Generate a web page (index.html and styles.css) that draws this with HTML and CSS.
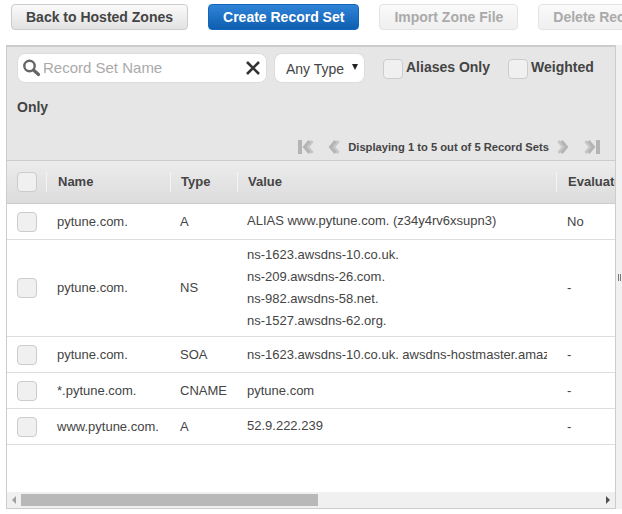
FILE: index.html
```html
<!DOCTYPE html>
<html lang="en">
<head>
    <meta charset="UTF-8">
    <title>Record Sets</title>
    <link rel="stylesheet" href="styles.css">
</head>
<body>
    <div class="toolbar">
        <button class="btn">Back to Hosted Zones</button>
        <button class="btn btn-primary">Create Record Set</button>
        <button class="btn btn-disabled">Import Zone File</button>
        <button class="btn btn-disabled">Delete Record Set</button>
    </div>
    <div class="main">
        <div class="panel">
            <div class="filters">
                <div class="filter-row">
                    <div class="search">
                        <svg class="search-icon" width="20" height="20" viewBox="0 0 20 20">
                            <circle cx="7.5" cy="8" r="5.2" fill="none" stroke="#666" stroke-width="2.4"/>
                            <path d="M11.5 12L16.5 16.5" stroke="#666" stroke-width="3.2" stroke-linecap="round"/>
                        </svg>
                        <span class="search-text">Record Set Name</span>
                        <svg class="clear-icon" width="14" height="14" viewBox="0 0 14 14">
                            <path d="M1 1L13 13M13 1L1 13" stroke="#333" stroke-width="2.6"/>
                        </svg>
                    </div>
                    <div class="type-select">Any Type<span class="caret"></span></div>
                    <label class="check-label"><span class="check"></span>Aliases Only</label>
                    <label class="check-label"><span class="check"></span>Weighted</label>
                </div>
                <div class="only">Only</div>
                <div class="pager">
                    <svg class="pager-icon" width="18" height="16" viewBox="0 0 18 16">
                        <path d="M1 1h4v14H1z" fill="#b4b4b4"/>
                        <path d="M15.5 2L10.5 8l5 6" fill="none" stroke="#c6c6c6" stroke-width="3"/>
                        <path d="M12.5 2L7.5 8l5 6" fill="none" stroke="#b4b4b4" stroke-width="3"/>
                    </svg>
                    <svg class="pager-icon prev" width="14" height="16" viewBox="0 0 14 16">
                        <path d="M10.5 2L5.5 8l5 6" fill="none" stroke="#c6c6c6" stroke-width="3"/>
                        <path d="M7.5 2L2.5 8l5 6" fill="none" stroke="#b4b4b4" stroke-width="3"/>
                    </svg>
                    <span class="pager-text">Displaying 1 to 5 out of 5 Record Sets</span>
                    <svg class="pager-icon next" width="14" height="16" viewBox="0 0 14 16">
                        <path d="M3.5 2L8.5 8l-5 6" fill="none" stroke="#c6c6c6" stroke-width="3"/>
                        <path d="M6.5 2L11.5 8l-5 6" fill="none" stroke="#b4b4b4" stroke-width="3"/>
                    </svg>
                    <svg class="pager-icon" width="18" height="16" viewBox="0 0 18 16">
                        <path d="M13 1h4v14h-4z" fill="#b4b4b4"/>
                        <path d="M2.5 2L7.5 8l-5 6" fill="none" stroke="#c6c6c6" stroke-width="3"/>
                        <path d="M5.5 2L10.5 8l-5 6" fill="none" stroke="#b4b4b4" stroke-width="3"/>
                    </svg>
                </div>
            </div>
            <div class="table-wrap">
                <table class="records">
                    <colgroup>
                        <col class="col-check">
                        <col class="col-name">
                        <col class="col-type">
                        <col class="col-value">
                        <col class="col-eval">
                    </colgroup>
                    <thead>
                        <tr>
                            <th><span class="check"></span></th>
                            <th><span class="th-label">Name</span></th>
                            <th><span class="th-label">Type</span></th>
                            <th><span class="th-label">Value</span></th>
                            <th><span class="th-label">Evaluate Target Health</span></th>
                        </tr>
                    </thead>
                    <tbody>
                        <tr>
                            <td><span class="check"></span></td>
                            <td>pytune.com.</td>
                            <td>A</td>
                            <td><div class="value value-up">ALIAS www.pytune.com. (z34y4rv6xsupn3)</div></td>
                            <td>No</td>
                        </tr>
                        <tr class="row-ns">
                            <td><span class="check"></span></td>
                            <td>pytune.com.</td>
                            <td>NS</td>
                            <td>
                                <div class="value">ns-1623.awsdns-10.co.uk.</div>
                                <div class="value">ns-209.awsdns-26.com.</div>
                                <div class="value">ns-982.awsdns-58.net.</div>
                                <div class="value">ns-1527.awsdns-62.org.</div>
                            </td>
                            <td>-</td>
                        </tr>
                        <tr>
                            <td><span class="check"></span></td>
                            <td>pytune.com.</td>
                            <td>SOA</td>
                            <td><div class="value">ns-1623.awsdns-10.co.uk. awsdns-hostmaster.amazon.com. 1 7200 900</div></td>
                            <td>-</td>
                        </tr>
                        <tr>
                            <td><span class="check"></span></td>
                            <td>*.pytune.com.</td>
                            <td>CNAME</td>
                            <td><div class="value">pytune.com</div></td>
                            <td>-</td>
                        </tr>
                        <tr>
                            <td><span class="check"></span></td>
                            <td>www.pytune.com.</td>
                            <td>A</td>
                            <td><div class="value value-up">52.9.222.239</div></td>
                            <td>-</td>
                        </tr>
                    </tbody>
                </table>
            </div>
            <div class="scrollbar">
                <span class="arrow-left"></span>
                <div class="scroll-track"><div class="scroll-thumb"></div></div>
                <span class="arrow-right"></span>
            </div>
        </div>
        <div class="side"><span class="handle"></span></div>
    </div>
</body>
</html>
```

FILE: styles.css
```css
html, body {
    height: 100%;
}

body {
    margin: 0;
    font-family: "Liberation Sans", Arial, sans-serif;
    color: #444;
    background-color: #fff;
    overflow: hidden;
}

.toolbar {
    display: flex;
    gap: 20px;
    height: 45px;
    padding: 4px 0 0 11px;
    box-sizing: border-box;
    white-space: nowrap;
    overflow: hidden;
}

.btn {
    flex: none;
    height: 26px;
    padding: 0 14px;
    font-family: inherit;
    font-size: 14px;
    font-weight: bold;
    color: #444;
    background: linear-gradient(#fafafa, #e2e2e2);
    border: 1px solid #ccc;
    border-radius: 4px;
}

.btn-primary {
    color: #fff;
    background: linear-gradient(#2f84d8, #0f5eb0);
    border-color: #1166bb;
}

.btn-disabled {
    color: #aaa;
    background: linear-gradient(#fafafa, #efefef);
    border-color: #e3e3e3;
}

.main {
    display: flex;
    height: 464px;
    padding-left: 6px;
}

.panel {
    display: flex;
    flex-direction: column;
    width: 610px;
    box-sizing: border-box;
    border: 1px solid #ccc;
    border-top-width: 2px;
    overflow: hidden;
}

.side {
    display: flex;
    align-items: center;
    justify-content: flex-end;
    flex: 1;
    background-color: #f1f1f1;
}

.handle {
    width: 1px;
    height: 7px;
    margin-right: 1px;
    border-left: 1px solid #777;
    border-right: 1px solid #777;
}

.filters {
    flex: none;
    height: 114px;
    box-sizing: border-box;
    padding: 6px 0 0 10px;
    background-color: #e6e6e6;
    border-bottom: 1px solid #ccc;
}

.filter-row {
    display: flex;
    align-items: flex-start;
    height: 30px;
}

.search {
    display: flex;
    align-items: center;
    width: 250px;
    height: 30px;
    box-sizing: border-box;
    padding: 0 6px 0 4px;
    background-color: #fff;
    border: 1px solid #ddd;
    border-radius: 8px;
}

.search-icon {
    flex: none;
}

.search-text {
    flex: 1;
    margin-left: 1px;
    padding-bottom: 2px;
    font-size: 15px;
    color: #aaa;
}

.clear-icon {
    flex: none;
}

.type-select {
    display: flex;
    align-items: center;
    width: 91px;
    height: 30px;
    box-sizing: border-box;
    margin-left: 7px;
    padding: 2px 0 0 11px;
    font-size: 14px;
    background-color: #fff;
    border: 1px solid #ddd;
    border-radius: 8px;
}

.caret {
    width: 0;
    height: 0;
    margin: -4px 0 0 8px;
    border-left: 3px solid transparent;
    border-right: 3px solid transparent;
    border-top: 6px solid #222;
}

.check {
    display: inline-block;
    flex: none;
    width: 18px;
    height: 18px;
    background-color: #f0f0f0;
    border: 1px solid #ccc;
    border-radius: 4px;
    vertical-align: middle;
}

.check-label {
    display: flex;
    align-items: flex-start;
    gap: 3px;
    padding-top: 6px;
    margin-left: 18px;
    font-size: 14px;
    font-weight: bold;
    color: #444;
}

.only {
    margin-top: 16px;
    font-size: 14px;
    font-weight: bold;
}

.pager {
    display: flex;
    align-items: center;
    justify-content: flex-end;
    margin-top: 24px;
    padding-right: 14px;
}

.pager-text {
    margin: 0 6px;
    font-size: 11.2px;
    font-weight: bold;
}

.prev {
    margin-left: 13px;
}

.next {
    margin-right: 14px;
}

.table-wrap {
    flex: 1;
    overflow: hidden;
}

.records {
    width: 720px;
    table-layout: fixed;
    border-collapse: collapse;
    font-size: 13px;
}

.col-check {
    width: 39px;
}

.col-name {
    width: 124px;
}

.col-type {
    width: 67px;
}

.col-value {
    width: 319px;
}

.records th {
    height: 42px;
    padding: 0;
    text-align: left;
    background: linear-gradient(#ececec, #dcdcdc);
    border-bottom: 1px solid #ccc;
}

.records th:first-child,
.records td:first-child {
    padding-left: 10px;
}

.th-label {
    display: block;
    padding-left: 10px;
    border-left: 1px solid #f4f4f4;
    line-height: 20px;
    white-space: nowrap;
}

.records th:nth-child(2) .th-label,
.records th:nth-child(5) .th-label {
    padding-left: 11px;
}

.records td {
    height: 35px;
    padding: 0 0 0 10px;
    border-bottom: 1px solid #ddd;
    white-space: nowrap;
    overflow: hidden;
}

.records td:nth-child(2),
.records td:nth-child(5) {
    padding-left: 11px;
}

.value {
    width: 300px;
    line-height: 22px;
    overflow: hidden;
}

.value-up {
    margin-top: -2px;
}

.row-ns td {
    height: 96px;
}

.row-ns td:nth-child(2),
.row-ns td:nth-child(3),
.row-ns td:nth-child(5) {
    height: 94px;
    padding-bottom: 2px;
}

.scrollbar {
    display: flex;
    align-items: center;
    flex: none;
    height: 16px;
    background-color: #f0f0f0;
}

.arrow-left,
.arrow-right {
    flex: none;
    width: 0;
    height: 0;
    border-top: 4px solid transparent;
    border-bottom: 4px solid transparent;
}

.arrow-left {
    margin-left: 5px;
    border-right: 4px solid #a0a0a0;
}

.arrow-right {
    margin-right: 5px;
    border-left: 4px solid #505050;
}

.scroll-track {
    flex: 1;
    margin: 0 5px;
}

.scroll-thumb {
    width: 297px;
    height: 12px;
    background-color: #b8b8b8;
}
```
